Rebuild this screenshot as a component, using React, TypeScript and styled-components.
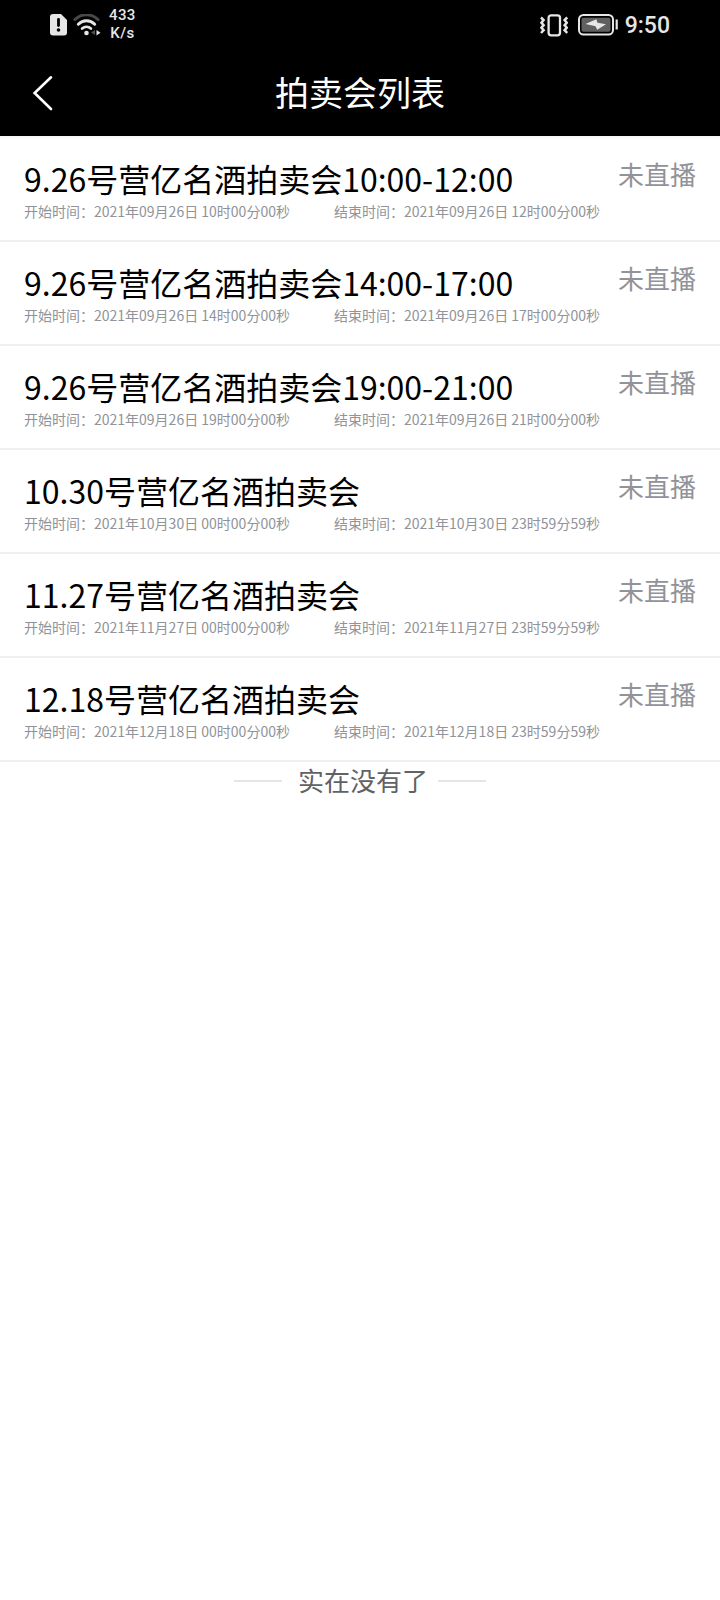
import React from 'react';
import styled, { createGlobalStyle } from 'styled-components';

const Global = createGlobalStyle`
  * { box-sizing: border-box; }
  body { margin: 0; background: #fff; font-family: "Noto Sans CJK SC", sans-serif; }
`;
const Screen = styled.main`
  width: 720px;
  height: 1600px;
  overflow: hidden;
  background: #fff;
`;
const StatusBar = styled.div`
  height: 50px;
  padding: 0 50px 0 49.5px;
  display: flex;
  align-items: center;
  justify-content: space-between;
  background: #000;
  color: #e6e6e6;
  font-family: Roboto, sans-serif;
`;
const Group = styled.div`
  display: flex;
  align-items: center;
  height: 48px;
`;
const Glyph = styled.svg<{ $gap?: number }>`
  display: block;
  flex: none;
  margin-left: ${({ $gap = 0 }) => $gap}px;
`;
const Speed = styled.div`
  margin-left: 7.5px;
  padding-bottom: 2px;
  font-size: 15px;
  line-height: 18px;
  font-weight: 500;
  letter-spacing: 0.4px;
  text-align: center;
`;
const Clock = styled.span`
  margin-left: 6px;
  padding-top: 2px;
  font-size: 23px;
  line-height: 28px;
  font-weight: 500;
`;
const Header = styled.header`
  height: 86px;
  padding: 0 32px;
  display: grid;
  grid-template-columns: 22px 1fr 22px;
  align-items: center;
  background: #000;
  color: #fff;
`;
const Title = styled.h1`
  margin: 0;
  padding-bottom: 2px;
  text-align: center;
  font-size: 34px;
  line-height: 50px;
  font-weight: 400;
`;
const List = styled.section`
  border-top: 2px solid #f8f8f8;
`;
const Row = styled.article`
  height: 104px;
  padding: 17px 24px 0;
  display: flex;
  justify-content: space-between;
  border-bottom: 2px solid #f0f0f0;
  white-space: nowrap;
`;
const Name = styled.h2`
  margin: 0;
  height: 46px;
  line-height: 46px;
  font-size: 32px;
  font-weight: 400;
  color: #000;
`;
const Times = styled.div`
  display: flex;
  gap: 44px;
  font-size: 14px;
  line-height: 20px;
  color: #909399;
`;
const Time = styled.span`
  width: 266px;
`;
const State = styled.span`
  font-size: 26px;
  line-height: 38px;
  color: #909399;
`;
const Footer = styled.footer`
  display: flex;
  align-items: center;
  justify-content: center;
  height: 38px;
  color: #606266;
  font-size: 26px;
  line-height: 36px;
`;
const Rule = styled.i`
  width: 48px;
  height: 2px;
  background: #e5e5e5;
`;
const End = styled.span`
  margin: 0 10px 0 16px;
  padding-bottom: 2px;
`;

const sales = [
  ['9.26号营亿名酒拍卖会10:00-12:00', '2021年09月26日 10时00分00秒', '2021年09月26日 12时00分00秒'],
  ['9.26号营亿名酒拍卖会14:00-17:00', '2021年09月26日 14时00分00秒', '2021年09月26日 17时00分00秒'],
  ['9.26号营亿名酒拍卖会19:00-21:00', '2021年09月26日 19时00分00秒', '2021年09月26日 21时00分00秒'],
  ['10.30号营亿名酒拍卖会', '2021年10月30日 00时00分00秒', '2021年10月30日 23时59分59秒'],
  ['11.27号营亿名酒拍卖会', '2021年11月27日 00时00分00秒', '2021年11月27日 23时59分59秒'],
  ['12.18号营亿名酒拍卖会', '2021年12月18日 00时00分00秒', '2021年12月18日 23时59分59秒'],
];

const SimIcon = () => (
  <Glyph width="17" height="22" viewBox="0 0 17 22">
    <path d="M3 0h8l6 6v12.500a3 3 0 0 1-3 3H3a3 3 0 0 1-3-3V3a3 3 0 0 1 3-3z" fill="#e6e6e6" />
    <path d="M8.500 5.500v6" stroke="#000" strokeWidth="2.800" strokeLinecap="round" />
    <circle cx="8.500" cy="16" r="1.800" fill="#000" />
  </Glyph>
);

const WifiIcon = () => (
  <Glyph $gap={6} width="29" height="22" viewBox="0 0 29 22" fill="none" strokeLinecap="round">
    <path d="M2 5.500C8.500-.8 18.500-.8 25 5.500" stroke="#484848" strokeWidth="3" />
    <path d="M5.300 10.300c4.600-4.700 11.800-4.700 16.400 0" stroke="#e6e6e6" strokeWidth="2.900" />
    <path d="M9.100 14.500c2.600-2.300 6.200-2.300 8.800 0" stroke="#e6e6e6" strokeWidth="2.700" />
    <circle cx="13.500" cy="19" r="2.300" fill="#e6e6e6" />
    <path d="M22 16v5l-4-2.500z" fill="#505050" />
    <path d="M23.500 16v5.500l4-2.750z" fill="#e6e6e6" />
  </Glyph>
);

const VibrateIcon = () => (
  <Glyph width="28" height="23" viewBox="0 0 28 23" fill="none" stroke="#e6e6e6">
    <rect x="8.600" y="1.300" width="11.400" height="20" rx="2.500" strokeWidth="2.300" />
    <path d="M1 3.500l2.600 2.500L1.400 8.700l2.200 2.500L1.400 13.700l2.200 2.500L1 19" strokeWidth="2.500" />
    <path d="M27.200 3.500l-2.600 2.500 2.200 2.700-2.200 2.500 2.200 2.500-2.200 2.500 2.600 2.800" strokeWidth="2.500" />
  </Glyph>
);

const BatteryIcon = () => (
  <Glyph $gap={10} width="41" height="22" viewBox="0 0 41 22">
    <rect x="1" y="1" width="34" height="19.500" rx="4.500" fill="none" stroke="#e6e6e6" strokeWidth="2" />
    <rect x="3.500" y="3.800" width="29" height="14" rx="2" fill="#606060" />
    <path d="M18.300 5.300 7.500 10l10 2.300 1.700 3.500L28 10.200l-8.500-1.400z" fill="#e6e6e6" />
    <path d="M38.700 5.500v10" stroke="#e6e6e6" strokeWidth="2.200" />
  </Glyph>
);

export default function App() {
  return (
    <Screen>
      <Global />
      <StatusBar>
        <Group><SimIcon /><WifiIcon /><Speed>433<br />K/s</Speed></Group>
        <Group><VibrateIcon /><BatteryIcon /><Clock>9:50</Clock></Group>
      </StatusBar>
      <Header>
        <Glyph width="22" height="36" viewBox="0 0 22 36" fill="none" stroke="#fff" strokeWidth="2.600" strokeLinecap="round"><path d="M19 2.300 2.600 18 19 34" /></Glyph>
        <Title>拍卖会列表</Title>
      </Header>
      <List>
        {sales.map(([name, start, end]) => (
          <Row key={name}>
            <div>
              <Name>{name}</Name>
              <Times><Time>开始时间：{start}</Time><Time>结束时间：{end}</Time></Times>
            </div>
            <State>未直播</State>
          </Row>
        ))}
      </List>
      <Footer><Rule /><End>实在没有了</End><Rule /></Footer>
    </Screen>
  );
}
